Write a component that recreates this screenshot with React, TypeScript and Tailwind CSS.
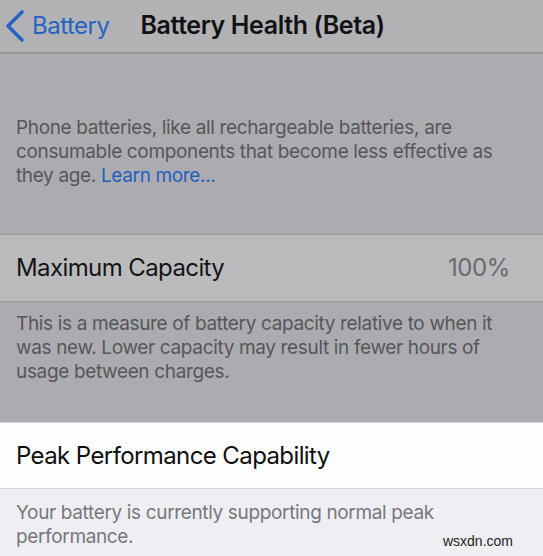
export default function App() {
  return (
    <div
      className="flex h-[556px] w-[543px] flex-col overflow-hidden bg-[#acacb0]"
      style={{ fontFamily: 'Inter, "Liberation Sans", sans-serif' }}
    >
      {/* nav bar */}
      <div className="flex h-[54px] shrink-0 items-center border-b-2 border-[#97979a] bg-[#b2b2b4]">
        <svg width="22" height="34" viewBox="0 0 22 34" className="ml-[3px] shrink-0">
          <path d="M19 3 L5 17 L19 31" fill="none" stroke="#2563c2" strokeWidth="3.6" strokeLinecap="round" strokeLinejoin="round" />
        </svg>
        <span className="ml-[7px] text-[24px] tracking-[-0.5px] text-[#2563c2]">Battery</span>
        <span className="ml-[31px] text-[25px] font-semibold tracking-[-0.4px] text-[#111113]">
          Battery Health (Beta)
        </span>
      </div>

      {/* intro */}
      <div className="h-[62px] shrink-0" />
      <p className="px-4 text-[19px] leading-[24px] tracking-[-0.35px] whitespace-nowrap text-[#56565a]">
        Phone batteries, like all rechargeable batteries, are
        <br />
        consumable components that become less effective as
        <br />
        they age. <span className="text-[#1f5fbf]">Learn more...</span>
      </p>
      <div className="h-[46px] shrink-0" />

      {/* maximum capacity */}
      <div className="flex h-[68px] shrink-0 items-center justify-between border-y border-[#98989b] bg-[#bbbbbd] pl-4 pr-[33px]">
        <span className="text-[24px] tracking-[-0.6px] text-[#141416]">Maximum Capacity</span>
        <span className="text-[24px] tracking-[-0.4px] text-[#6a6a6e]">100%</span>
      </div>
      <p className="mt-[10px] px-4 text-[19px] leading-[24px] tracking-[-0.35px] whitespace-nowrap text-[#56565a]">
        This is a measure of battery capacity relative to when it
        <br />
        was new. Lower capacity may result in fewer hours of
        <br />
        usage between charges.
      </p>
      <div className="h-[38px] shrink-0" />

      {/* peak performance */}
      <div className="flex h-[67px] shrink-0 items-center border-y border-[#d4d4d8] bg-[#fdfdfd] pl-4">
        <span className="text-[24px] tracking-[-0.6px] text-[#0f0f10]">Peak Performance Capability</span>
      </div>
      <div className="relative flex-1 bg-[#efeff3]">
        <p className="mt-[12px] px-4 text-[19px] leading-[24px] tracking-[-0.35px] whitespace-nowrap text-[#77777c]">
          Your battery is currently supporting normal peak
          <br />
          performance.
        </p>
        <span
          className="absolute right-[30px] bottom-[4px] text-[14px] text-[#222]"
          style={{ fontFamily: '"Liberation Sans", sans-serif' }}
        >
          wsxdn.com
        </span>
      </div>
    </div>
  );
}
